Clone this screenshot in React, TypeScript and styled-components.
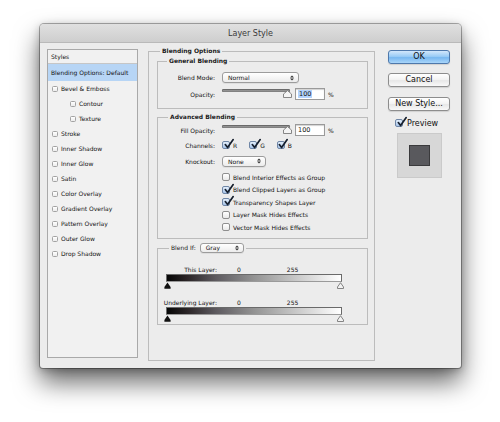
import React from "react";
import styled, { createGlobalStyle } from "styled-components";

const GlobalStyle = createGlobalStyle`
  html, body { margin: 0; padding: 0; background: #ffffff; }
  body {
    font-family: "DejaVu Sans", "Noto Sans", sans-serif;
    color: #111111;
  }
  * { box-sizing: border-box; }
`;

const Page = styled.div`
  width: 500px;
  height: 422px;
  padding: 24px 0 0 40px;
  overflow: hidden;
`;

const Window = styled.div`
  width: 421px;
  height: 344px;
  background: #ececec;
  border-radius: 4px 4px 3px 3px;
  box-shadow: 0 0 0 1px rgba(0, 0, 0, 0.3), 0 14px 26px rgba(0, 0, 0, 0.6),
    0 2px 8px rgba(0, 0, 0, 0.25);
  display: flex;
  flex-direction: column;
  overflow: hidden;
`;

const TitleBar = styled.div`
  flex: none;
  height: 19px;
  display: flex;
  align-items: center;
  justify-content: center;
  background: linear-gradient(#e0e0e0, #cecece);
  border-bottom: 1px solid #b9b9b9;
  font-size: 8px;
  color: #3a3a3a;
`;

const Body = styled.div`
  flex: 1;
  display: flex;
  align-items: flex-start;
  padding: 4px 0 0 7px;
`;

/* ---------- left styles list ---------- */

const StyleList = styled.div`
  flex: none;
  width: 91px;
  height: 309px;
  margin-top: 2px;
  background: #f1f1f1;
  border: 1px solid #a9a9a9;
  display: flex;
  flex-direction: column;
`;

const ListHeader = styled.div`
  height: 14px;
  padding-left: 3px;
  border-bottom: 1px solid #c6c6c6;
  font-size: 6px;
  line-height: 13px;
`;

const ListItem = styled.div<{ $active?: boolean; $indent?: boolean }>`
  height: ${(p) => (p.$active ? 17 : 15)}px;
  display: flex;
  align-items: center;
  gap: 3px;
  padding-left: ${(p) => (p.$active ? 3 : p.$indent ? 22 : 4)}px;
  background: ${(p) => (p.$active ? "#b7d5f5" : "transparent")};
  font-size: 6px;
  white-space: nowrap;
`;

const MiniBox = styled.span`
  flex: none;
  width: 6px;
  height: 6px;
  border: 1px solid #a3a3a3;
  border-radius: 1.5px;
  background: linear-gradient(#ffffff, #ececec);
`;

/* ---------- middle fieldsets ---------- */

const Group = styled.fieldset<{ $h: number; $outer?: boolean; $mt?: number }>`
  margin: ${(p) => p.$mt ?? 0}px 0 0 0;
  min-width: 0;
  height: ${(p) => p.$h}px;
  border: 1px solid #bcbcbc;
  padding: ${(p) => (p.$outer ? "2px 6px 0 8px" : "0")};
  flex: none;
`;

const OuterGroup = styled(Group)`
  width: 227px;
  margin-left: 10px;
`;

const Legend = styled.legend<{ $inset: number }>`
  margin-left: ${(p) => p.$inset}px;
  padding: 0 2px;
  font-size: 6px;
  font-weight: bold;
  line-height: 8px;
  color: #1c1c1c;
  display: flex;
  align-items: center;
  gap: 4px;
`;

const LegendText = styled.span`
  font-weight: normal;
`;

const Content = styled.div<{ $pt: number }>`
  padding-top: ${(p) => p.$pt}px;
  display: flex;
  flex-direction: column;
`;

const Row = styled.div<{ $h: number; $mt?: number }>`
  display: flex;
  align-items: center;
  height: ${(p) => p.$h}px;
  margin-top: ${(p) => p.$mt ?? 0}px;
  font-size: 6px;
`;

const Label = styled.span`
  flex: none;
  width: 57px;
  margin-right: 7px;
  text-align: right;
  font-size: 6px;
  white-space: nowrap;
`;

const Select = styled.div<{ $w: number; $h: number }>`
  flex: none;
  width: ${(p) => p.$w}px;
  height: ${(p) => p.$h}px;
  border: 1px solid #9c9c9c;
  border-radius: 3px;
  background: linear-gradient(#ffffff, #ececec);
  box-shadow: 0 1px 0 rgba(0, 0, 0, 0.06);
  display: flex;
  align-items: center;
  justify-content: space-between;
  padding: 0 4px 0 5px;
  font-size: 6px;
  font-weight: normal;
  color: #111111;
`;

const Slider = styled.div`
  position: relative;
  flex: none;
  align-self: flex-start;
  width: 70px;
  height: 12px;
  margin-right: 3px;
`;

const Track = styled.div`
  margin-top: 1px;
  width: 68px;
  height: 3px;
  border-radius: 2px;
  background: linear-gradient(#6f6f6f, #b4b4b4);
  box-shadow: inset 0 0 0 0.5px #5a5a5a;
`;

const Thumb = styled.svg`
  position: absolute;
  right: 0;
  top: 2px;
`;

const NumberField = styled.div`
  flex: none;
  width: 30px;
  height: 12px;
  border: 1px solid #9a9a9a;
  background: #ffffff;
  box-shadow: inset 0 1px 1px rgba(0, 0, 0, 0.18);
  display: flex;
  align-items: center;
  padding-left: 2px;
  font-size: 6.5px;
`;

const Selected = styled.span`
  background: #b3d3fc;
  padding: 0 1px;
`;

const Percent = styled.span`
  margin-left: 3px;
  font-size: 6px;
`;

const ChannelGroup = styled.div`
  display: flex;
  align-items: center;
  gap: 12px;
`;

const CheckItem = styled.label`
  display: flex;
  align-items: center;
  gap: 3px;
  font-size: 6px;
  white-space: nowrap;
`;

const CheckList = styled.div`
  margin-left: 64px;
  margin-top: 4px;
  display: flex;
  flex-direction: column;
`;

const CheckRow = styled(CheckItem)`
  height: 12.5px;
`;

const Box = styled.span<{ $checked?: boolean }>`
  position: relative;
  flex: none;
  width: 8px;
  height: 8px;
  border: 1px solid ${(p) => (p.$checked ? "#6f86a6" : "#8f8f8f")};
  border-radius: 2px;
  background: ${(p) =>
    p.$checked
      ? "linear-gradient(#e3eefa, #a8c5ea)"
      : "linear-gradient(#ffffff, #e9e9e9)"};
`;

const CheckMark = styled.svg`
  position: absolute;
  left: 0.5px;
  top: -3px;
  overflow: visible;
`;

const LevelLabels = styled.div<{ $mt: number }>`
  display: flex;
  align-items: center;
  height: 8px;
  margin-top: ${(p) => p.$mt}px;
  font-size: 6px;
`;

const LevelName = styled.span`
  width: 59px;
  text-align: right;
  white-space: nowrap;
`;

const LevelNum = styled.span<{ $ml: number }>`
  margin-left: ${(p) => p.$ml}px;
`;

const LevelBar = styled.div`
  margin: 1px 0 0 8px;
  width: 176px;
  height: 8px;
  border: 1px solid #6a6a6a;
  border-bottom-color: #9a9a9a;
  background: linear-gradient(
    to right,
    #060606,
    #2c2628 12%,
    #5d5a5f 28%,
    #939393 50%,
    #cacaca 75%,
    #ffffff
  );
`;

const Markers = styled.div`
  margin-left: 6px;
  width: 180px;
  height: 7px;
  display: flex;
  justify-content: space-between;
  align-items: flex-end;
`;

/* ---------- right column ---------- */

const RightCol = styled.div`
  flex: none;
  width: 62px;
  margin-left: 13px;
  padding-top: 3px;
  display: flex;
  flex-direction: column;
`;

const Button = styled.button<{ $primary?: boolean; $mt?: number }>`
  width: 62px;
  height: 14px;
  margin-top: ${(p) => p.$mt ?? 0}px;
  padding: 0;
  border-radius: 3px;
  border: 1px solid ${(p) => (p.$primary ? "#4e78ab" : "#8d8d8d")};
  background: ${(p) =>
    p.$primary
      ? "linear-gradient(#d2e7fb, #9accf6 45%, #78b8f0 55%, #a9d5fa)"
      : "linear-gradient(#ffffff, #f4f4f4 45%, #e7e7e7 55%, #f9f9f9)"};
  box-shadow: 0 1px 1px rgba(0, 0, 0, 0.12);
  font-family: "DejaVu Sans", sans-serif;
  font-size: 8px;
  line-height: 12px;
  color: #111111;
`;

const PreviewRow = styled(CheckItem)`
  margin: 8px 0 0 7px;
  gap: 4px;
  font-size: 8px;
  height: 8px;
`;

const Swatch = styled.div`
  margin: 6px 0 0 9px;
  width: 45px;
  height: 45px;
  background: #d7d7d7;
  border: 1px solid #cacaca;
  display: flex;
  align-items: center;
  justify-content: center;
`;

const SwatchInner = styled.div`
  width: 21px;
  height: 21px;
  background: #59595d;
  border: 1px solid #3a3a3c;
`;

/* ---------- small drawings ---------- */

const Arrows = () => (
  <svg width="4" height="6" viewBox="0 0 4 6">
    <path d="M0 2.4 L2 0.4 L4 2.4 Z M0 3.6 L2 5.6 L4 3.6 Z" fill="#333" />
  </svg>
);

const Check = () => (
  <CheckMark width="10" height="10" viewBox="0 0 10 10">
    <path
      d="M1.3 5.6 L3.6 8.6 L9.2 0.6"
      fill="none"
      stroke="#17202e"
      strokeWidth="1.7"
      strokeLinecap="round"
      strokeLinejoin="round"
    />
  </CheckMark>
);

const CheckBox = ({ checked }: { checked?: boolean }) => (
  <Box $checked={checked}>{checked && <Check />}</Box>
);

const SliderThumb = () => (
  <Thumb width="9" height="8" viewBox="0 0 9 8">
    <path
      d="M0.5 7.5 L0.5 4 L4.5 0.6 L8.5 4 L8.5 7.5 Z"
      fill="#f4f4f4"
      stroke="#7a7a7a"
      strokeWidth="0.9"
    />
  </Thumb>
);

const BlackMarker = () => (
  <svg width="7" height="7" viewBox="0 0 7 7">
    <path d="M3.5 0.5 L6.6 5 L6.6 6.8 L0.4 6.8 L0.4 5 Z" fill="#111" />
  </svg>
);

const WhiteMarker = () => (
  <svg width="7" height="7" viewBox="0 0 7 7">
    <path
      d="M3.5 0.7 L6.5 5 L6.5 6.5 L0.5 6.5 L0.5 5 Z"
      fill="#f2f2f2"
      stroke="#777"
      strokeWidth="0.9"
    />
  </svg>
);

const OpacitySlider = () => (
  <Slider>
    <Track />
    <SliderThumb />
  </Slider>
);

const styleItems: { name: string; indent?: boolean }[] = [
  { name: "Bevel & Emboss" },
  { name: "Contour", indent: true },
  { name: "Texture", indent: true },
  { name: "Stroke" },
  { name: "Inner Shadow" },
  { name: "Inner Glow" },
  { name: "Satin" },
  { name: "Color Overlay" },
  { name: "Gradient Overlay" },
  { name: "Pattern Overlay" },
  { name: "Outer Glow" },
  { name: "Drop Shadow" },
];

const advancedChecks: { name: string; checked: boolean }[] = [
  { name: "Blend Interior Effects as Group", checked: false },
  { name: "Blend Clipped Layers as Group", checked: true },
  { name: "Transparency Shapes Layer", checked: true },
  { name: "Layer Mask Hides Effects", checked: false },
  { name: "Vector Mask Hides Effects", checked: false },
];

export default function App() {
  return (
    <>
      <GlobalStyle />
      <Page>
        <Window>
          <TitleBar>Layer Style</TitleBar>
          <Body>
            <StyleList>
              <ListHeader>Styles</ListHeader>
              <ListItem $active>Blending Options: Default</ListItem>
              {styleItems.map((s) => (
                <ListItem key={s.name} $indent={s.indent}>
                  <MiniBox />
                  {s.name}
                </ListItem>
              ))}
            </StyleList>

            <OuterGroup $h={314} $outer>
              <Legend $inset={3}>Blending Options</Legend>

              <Group $h={52}>
                <Legend $inset={9}>General Blending</Legend>
                <Content $pt={7}>
                  <Row $h={11}>
                    <Label>Blend Mode:</Label>
                    <Select $w={77} $h={11}>
                      Normal
                      <Arrows />
                    </Select>
                  </Row>
                  <Row $h={12} $mt={5}>
                    <Label>Opacity:</Label>
                    <OpacitySlider />
                    <NumberField>
                      <Selected>100</Selected>
                    </NumberField>
                    <Percent>%</Percent>
                  </Row>
                </Content>
              </Group>

              <Group $h={126} $mt={4}>
                <Legend $inset={10}>Advanced Blending</Legend>
                <Content $pt={3}>
                  <Row $h={12}>
                    <Label>Fill Opacity:</Label>
                    <OpacitySlider />
                    <NumberField>100</NumberField>
                    <Percent>%</Percent>
                  </Row>
                  <Row $h={12} $mt={3}>
                    <Label>Channels:</Label>
                    <ChannelGroup>
                      <CheckItem>
                        <CheckBox checked />R
                      </CheckItem>
                      <CheckItem>
                        <CheckBox checked />G
                      </CheckItem>
                      <CheckItem>
                        <CheckBox checked />B
                      </CheckItem>
                    </ChannelGroup>
                  </Row>
                  <Row $h={12} $mt={4}>
                    <Label>Knockout:</Label>
                    <Select $w={44} $h={11}>
                      None
                      <Arrows />
                    </Select>
                  </Row>
                  <CheckList>
                    {advancedChecks.map((c) => (
                      <CheckRow key={c.name}>
                        <CheckBox checked={c.checked} />
                        {c.name}
                      </CheckRow>
                    ))}
                  </CheckList>
                </Content>
              </Group>

              <Group $h={82} $mt={4}>
                <Legend $inset={11}>
                  <LegendText>Blend If:</LegendText>
                  <Select $w={44} $h={10}>
                    Gray
                    <Arrows />
                  </Select>
                </Legend>
                <Content $pt={0}>
                  <LevelLabels $mt={12}>
                    <LevelName>This Layer:</LevelName>
                    <LevelNum $ml={20}>0</LevelNum>
                    <LevelNum $ml={46}>255</LevelNum>
                  </LevelLabels>
                  <LevelBar />
                  <Markers>
                    <BlackMarker />
                    <WhiteMarker />
                  </Markers>
                  <LevelLabels $mt={9}>
                    <LevelName>Underlying Layer:</LevelName>
                    <LevelNum $ml={20}>0</LevelNum>
                    <LevelNum $ml={46}>255</LevelNum>
                  </LevelLabels>
                  <LevelBar />
                  <Markers>
                    <BlackMarker />
                    <WhiteMarker />
                  </Markers>
                </Content>
              </Group>
            </OuterGroup>

            <RightCol>
              <Button $primary>OK</Button>
              <Button $mt={9}>Cancel</Button>
              <Button $mt={10}>New Style...</Button>
              <PreviewRow>
                <CheckBox checked />
                Preview
              </PreviewRow>
              <Swatch>
                <SwatchInner />
              </Swatch>
            </RightCol>
          </Body>
        </Window>
      </Page>
    </>
  );
}
